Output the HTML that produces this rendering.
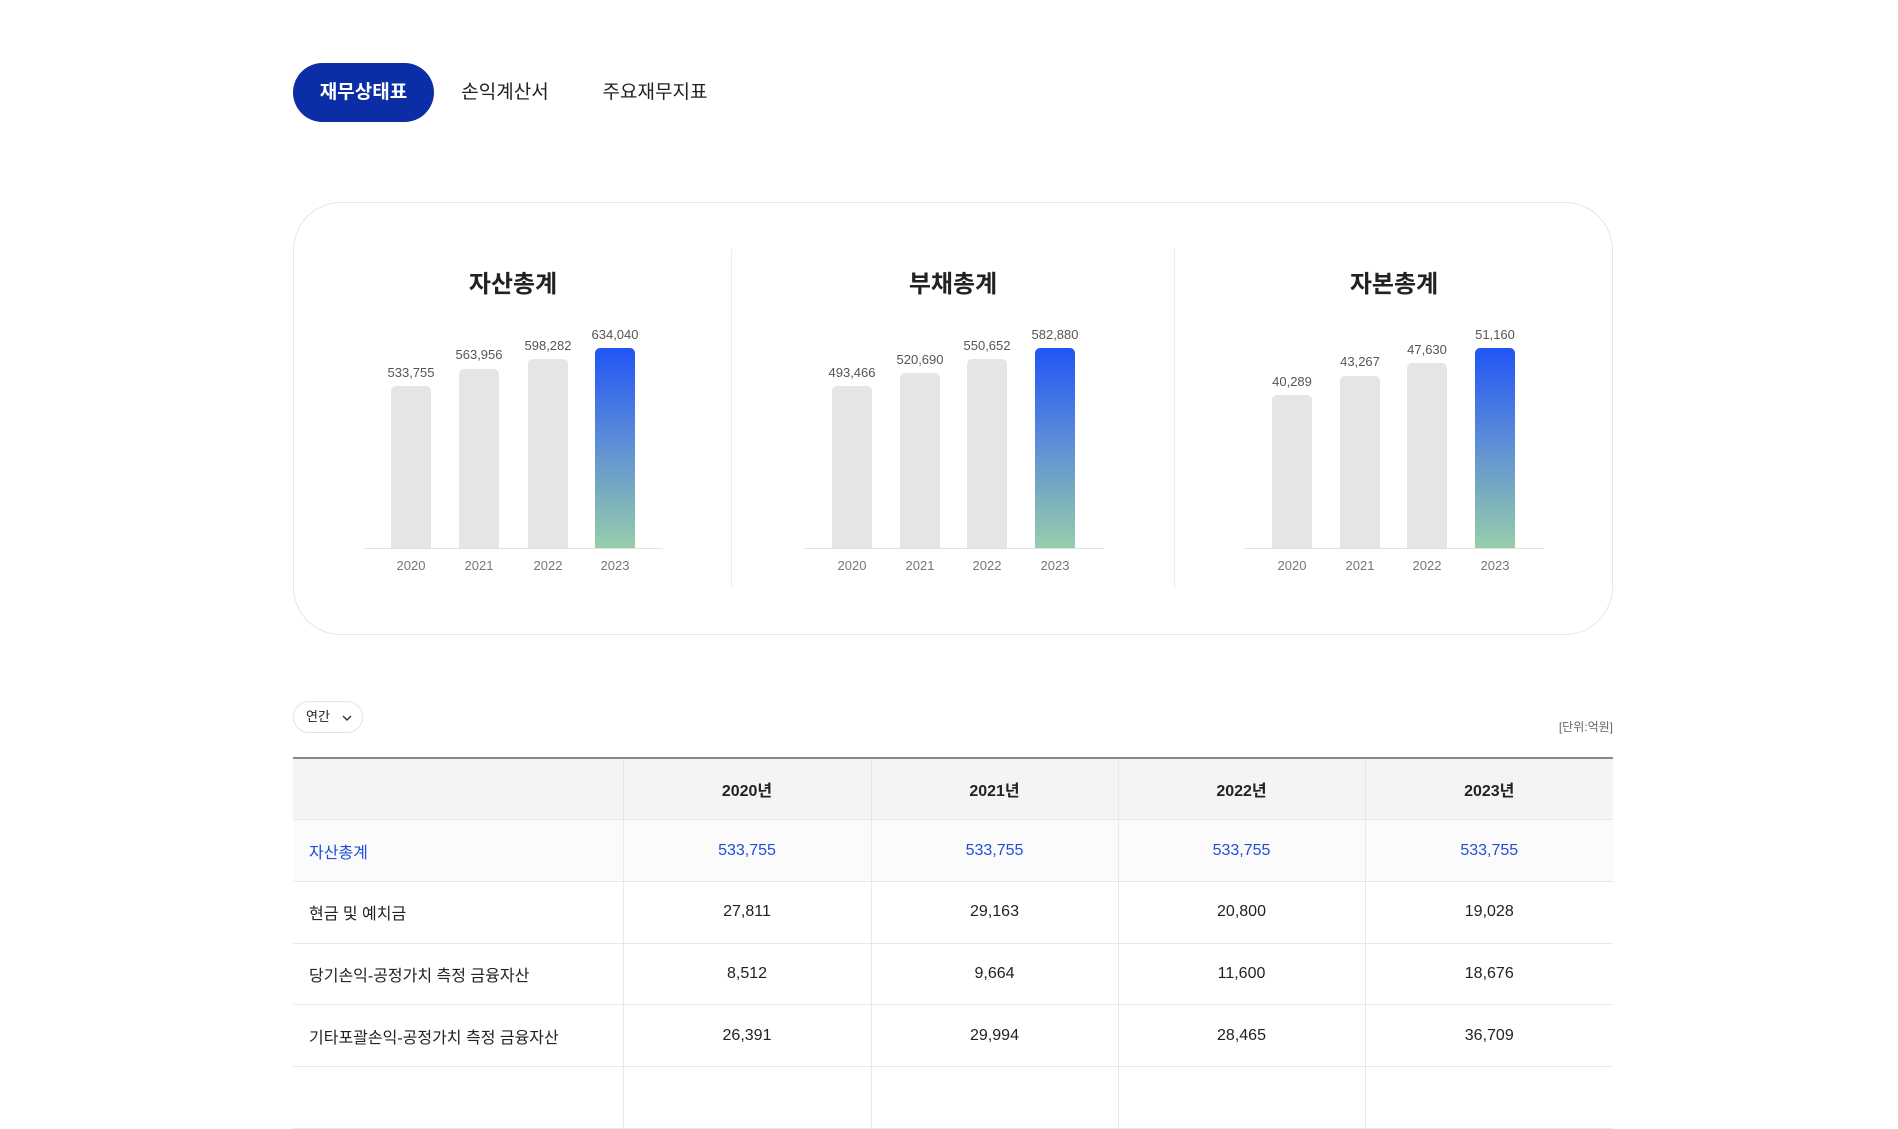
<!DOCTYPE html>
<html><head><meta charset="utf-8"><style>
*{margin:0;padding:0;box-sizing:border-box}
body{width:1898px;height:1066px;background:#fff;font-family:"Liberation Sans","Noto Sans CJK KR",sans-serif;color:#222;position:relative;overflow:hidden}
.abs{position:absolute}
.tab{position:absolute;top:63px;height:59px;line-height:59px;font-size:19px;color:#222;transform:translateX(-50%)}
.card{position:absolute;left:293px;top:202px;width:1320px;height:433px;border:1px solid #e6e6e6;border-radius:48px}
.div{position:absolute;top:249px;width:1px;height:339px;background:#ececec}
.title{position:absolute;top:264px;font-size:24px;font-weight:bold;transform:translateX(-50%);color:#222}
.axis{position:absolute;top:548px;height:1px;background:#e2e2e2}
.bar{position:absolute;width:40px;background:#e5e5e5;border-radius:5px 5px 0 0;transform:translateX(-50%)}
.bar.hi{background:linear-gradient(#1f55f5,#5a8ad8 45%,#96ceaa)}
.val{position:absolute;font-size:13px;color:#555;transform:translateX(-50%);white-space:nowrap}
.yr{position:absolute;top:558px;font-size:13px;color:#777;transform:translateX(-50%)}
table{position:absolute;left:293px;top:757px;width:1320px;border-collapse:collapse;border-top:2px solid #888;font-size:16px}
td{height:61.7px;border-bottom:1px solid #e8e8e8;border-left:1px solid #e8e8e8;text-align:center;color:#222}
td:first-child{border-left:none;text-align:left;padding-left:16px}
tr.h td{background:#f4f4f4;font-weight:bold}
tr.b td{color:#1f4fd8;background:#fbfbfb}
</style></head><body>
<div class="abs" style="left:293px;top:63px;width:141px;height:59px;border-radius:30px;background:#0b2ea6;color:#fff;font-size:19px;font-weight:bold;line-height:59px;text-align:center">재무상태표</div>
<div class="tab" style="left:505px">손익계산서</div>
<div class="tab" style="left:655px">주요재무지표</div>

<div class="card"></div>
<div class="div" style="left:731px"></div>
<div class="div" style="left:1174px"></div>

<div class="title" style="left:513px">자산총계</div>
<div class="title" style="left:953px">부채총계</div>
<div class="title" style="left:1394px">자본총계</div>

<div class="axis" style="left:364px;width:299px"></div>
<div class="axis" style="left:804px;width:300px"></div>
<div class="axis" style="left:1245px;width:299px"></div>

<!-- chart 1 -->
<div class="bar" style="left:411px;top:386px;height:162px"></div>
<div class="bar" style="left:479px;top:369px;height:179px"></div>
<div class="bar" style="left:548px;top:359px;height:189px"></div>
<div class="bar hi" style="left:615px;top:348px;height:200px"></div>
<div class="val" style="left:411px;top:365px">533,755</div>
<div class="val" style="left:479px;top:347px">563,956</div>
<div class="val" style="left:548px;top:338px">598,282</div>
<div class="val" style="left:615px;top:327px">634,040</div>
<div class="yr" style="left:411px">2020</div><div class="yr" style="left:479px">2021</div><div class="yr" style="left:548px">2022</div><div class="yr" style="left:615px">2023</div>

<!-- chart 2 -->
<div class="bar" style="left:852px;top:386px;height:162px"></div>
<div class="bar" style="left:920px;top:373px;height:175px"></div>
<div class="bar" style="left:987px;top:359px;height:189px"></div>
<div class="bar hi" style="left:1055px;top:348px;height:200px"></div>
<div class="val" style="left:852px;top:365px">493,466</div>
<div class="val" style="left:920px;top:352px">520,690</div>
<div class="val" style="left:987px;top:338px">550,652</div>
<div class="val" style="left:1055px;top:327px">582,880</div>
<div class="yr" style="left:852px">2020</div><div class="yr" style="left:920px">2021</div><div class="yr" style="left:987px">2022</div><div class="yr" style="left:1055px">2023</div>

<!-- chart 3 -->
<div class="bar" style="left:1292px;top:395px;height:153px"></div>
<div class="bar" style="left:1360px;top:376px;height:172px"></div>
<div class="bar" style="left:1427px;top:363px;height:185px"></div>
<div class="bar hi" style="left:1495px;top:348px;height:200px"></div>
<div class="val" style="left:1292px;top:374px">40,289</div>
<div class="val" style="left:1360px;top:354px">43,267</div>
<div class="val" style="left:1427px;top:342px">47,630</div>
<div class="val" style="left:1495px;top:327px">51,160</div>
<div class="yr" style="left:1292px">2020</div><div class="yr" style="left:1360px">2021</div><div class="yr" style="left:1427px">2022</div><div class="yr" style="left:1495px">2023</div>

<div class="abs" style="left:293px;top:701px;width:70px;height:32px;border:1px solid #e3e3e3;border-radius:16px;font-size:13px;line-height:30px;padding-left:12px">연간
<svg width="10" height="8" viewBox="0 0 10 8" style="position:absolute;left:48px;top:12px"><path d="M1 2l4 4 4-4" fill="none" stroke="#333" stroke-width="1.4"/></svg></div>
<div class="abs" style="right:285px;top:718px;font-size:12px;color:#666">[단위:억원]</div>

<table>
<colgroup><col style="width:330px"><col style="width:248px"><col style="width:247px"><col style="width:247px"><col style="width:248px"></colgroup>
<tr class="h"><td></td><td>2020년</td><td>2021년</td><td>2022년</td><td>2023년</td></tr>
<tr class="b"><td>자산총계</td><td>533,755</td><td>533,755</td><td>533,755</td><td>533,755</td></tr>
<tr><td>현금 및 예치금</td><td>27,811</td><td>29,163</td><td>20,800</td><td>19,028</td></tr>
<tr><td>당기손익-공정가치 측정 금융자산</td><td>8,512</td><td>9,664</td><td>11,600</td><td>18,676</td></tr>
<tr><td>기타포괄손익-공정가치 측정 금융자산</td><td>26,391</td><td>29,994</td><td>28,465</td><td>36,709</td></tr>
<tr><td>&nbsp;</td><td></td><td></td><td></td><td></td></tr>
</table>
</body></html>
